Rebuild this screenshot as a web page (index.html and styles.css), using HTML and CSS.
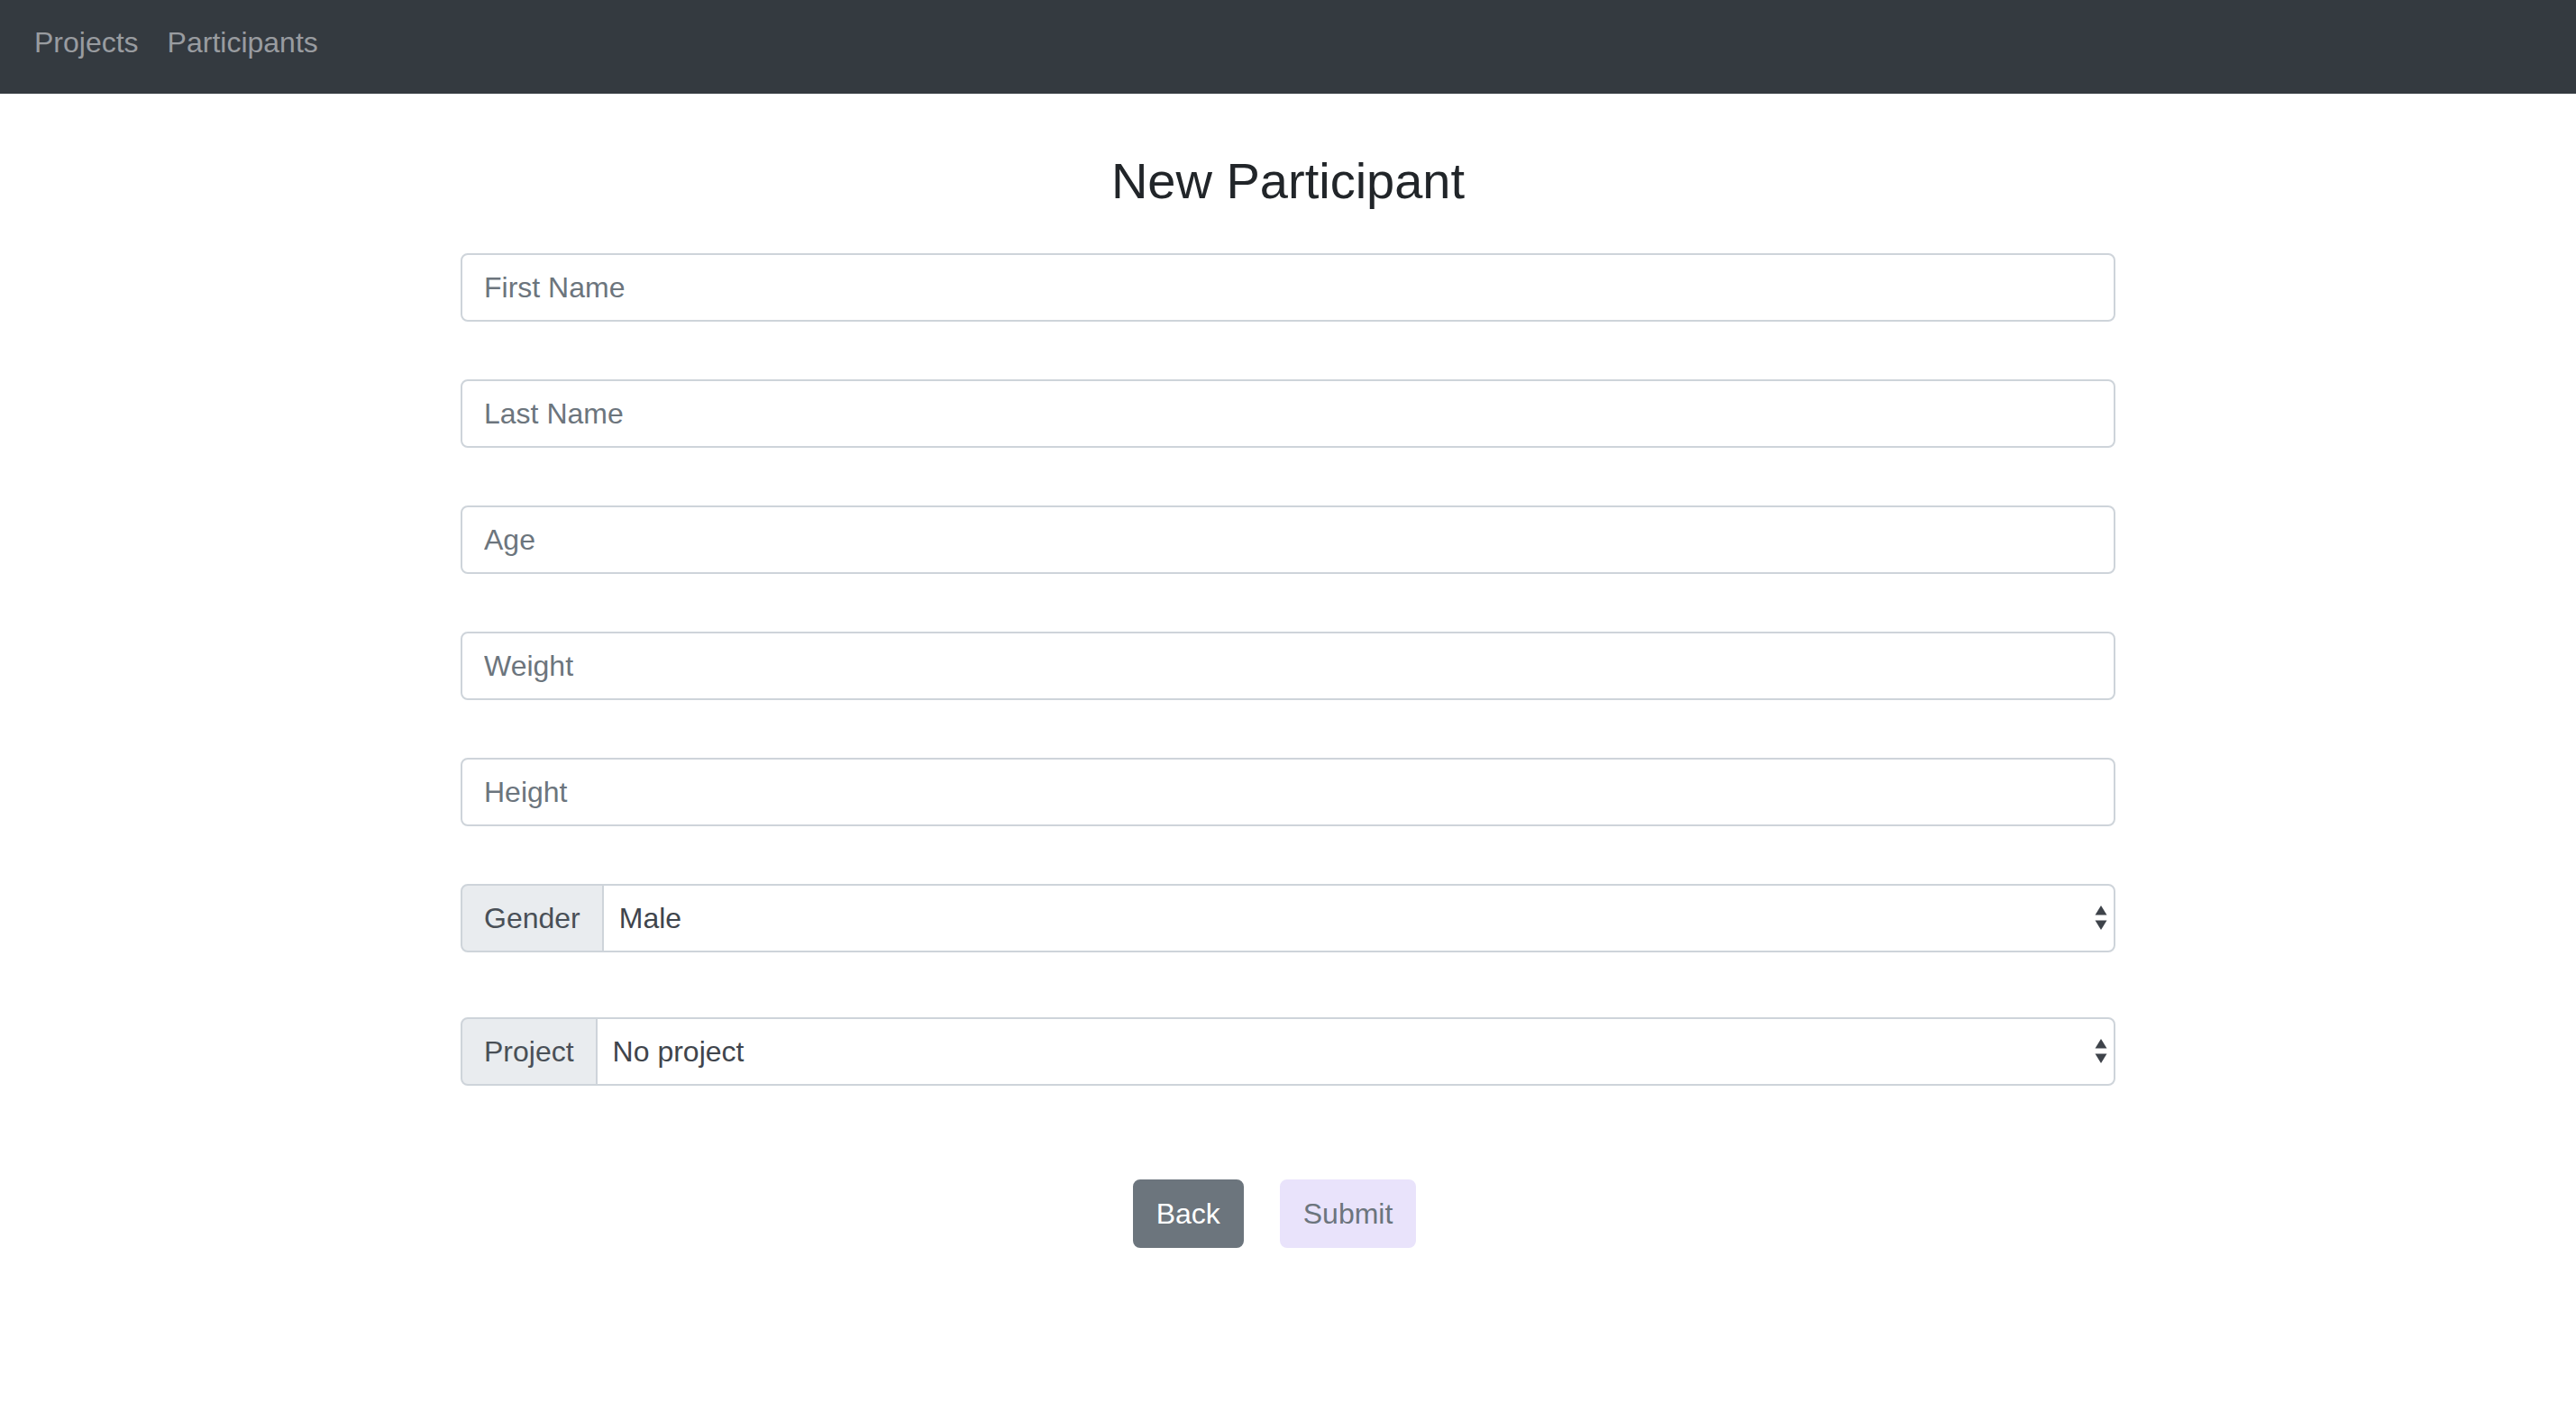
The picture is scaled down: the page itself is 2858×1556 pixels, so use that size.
FILE: index.html
```html
<!DOCTYPE html>
<html lang="en">
<head>
<meta charset="utf-8">
<title>New Participant</title>
<link rel="stylesheet" href="styles.css">
</head>
<body>
<nav class="navbar">
  <a class="nav-link" href="#">Projects</a>
  <a class="nav-link" href="#">Participants</a>
</nav>
<main class="page">
  <h1 class="title">New Participant</h1>
  <form class="form">
    <input class="field" type="text" placeholder="First Name">
    <input class="field" type="text" placeholder="Last Name">
    <input class="field" type="text" placeholder="Age">
    <input class="field" type="text" placeholder="Weight">
    <input class="field" type="text" placeholder="Height">
    <div class="input-group group-gender">
      <label class="group-label">Gender</label>
      <div class="select-wrap">
        <select class="select">
          <option>Male</option>
          <option>Female</option>
        </select>
        <svg class="select-arrows" width="14" height="28" viewBox="0 0 14 28"><polygon points="7,0 13.5,10.5 0.5,10.5" fill="#3e434a"/><polygon points="0.5,16.5 13.5,16.5 7,27" fill="#3e434a"/></svg>
      </div>
    </div>
    <div class="input-group group-project">
      <label class="group-label">Project</label>
      <div class="select-wrap">
        <select class="select">
          <option>No project</option>
        </select>
        <svg class="select-arrows" width="14" height="28" viewBox="0 0 14 28"><polygon points="7,0 13.5,10.5 0.5,10.5" fill="#3e434a"/><polygon points="0.5,16.5 13.5,16.5 7,27" fill="#3e434a"/></svg>
      </div>
    </div>
    <div class="actions">
      <button type="button" class="btn btn-back">Back</button>
      <button type="button" class="btn btn-submit">Submit</button>
    </div>
  </form>
</main>
</body>
</html>
```
FILE: styles.css
```css
* { box-sizing: border-box; }

body {
  margin: 0;
  font-family: "Liberation Sans", Arial, Helvetica, sans-serif;
  background: #ffffff;
  color: #212529;
}

.navbar {
  height: 104px;
  background: #343a40;
  display: flex;
  align-items: flex-start;
  gap: 32px;
  padding: 23px 0 0 38px;
}

.nav-link {
  font-size: 32px;
  line-height: 48px;
  color: #999ca0;
  text-decoration: none;
}

.page {
  width: 1836px;
  margin: 0 auto;
}

.title {
  margin: 63px 0 47px;
  font-size: 56px;
  line-height: 67px;
  font-weight: 400;
  text-align: center;
  color: #212529;
}

.form {
  display: flex;
  flex-direction: column;
}

.field {
  display: block;
  width: 100%;
  height: 76px;
  margin: 0 0 64px;
  padding: 12px 24px;
  font-family: inherit;
  font-size: 32px;
  line-height: 48px;
  color: #495057;
  background: #fff;
  border: 2px solid #ced4da;
  border-radius: 8px;
  outline: none;
}

.field::placeholder {
  color: #6c757d;
  opacity: 1;
}

.input-group {
  display: flex;
  height: 76px;
}

.group-gender { margin-bottom: 72px; }
.group-project { margin-bottom: 104px; }

.group-label {
  flex: none;
  padding: 12px 24px;
  font-size: 32px;
  line-height: 48px;
  color: #495057;
  background: #e9ecef;
  border: 2px solid #ced4da;
  border-radius: 8px 0 0 8px;
}

.select-wrap {
  position: relative;
  flex: 1;
  margin-left: -2px;
}

.select {
  appearance: none;
  -webkit-appearance: none;
  width: 100%;
  height: 76px;
  padding: 12px 48px 12px 17px;
  font-family: inherit;
  font-size: 32px;
  line-height: 48px;
  color: #3f454c;
  background: #fff;
  border: 2px solid #ced4da;
  border-radius: 0 8px 8px 0;
  outline: none;
}

.select-arrows {
  position: absolute;
  right: 9px;
  top: 24px;
  pointer-events: none;
}

.actions {
  display: flex;
  justify-content: center;
  gap: 40px;
  padding-right: 30px;
}

.btn {
  height: 76px;
  padding: 12px 24px;
  font-family: inherit;
  font-size: 32px;
  line-height: 48px;
  border: 2px solid transparent;
  border-radius: 8px;
}

.btn-back {
  background: #6c757d;
  border-color: #6c757d;
  color: #ffffff;
}

.btn-submit {
  background: #e9e3fb;
  border-color: #e9e3fb;
  color: #6c757d;
}
```
